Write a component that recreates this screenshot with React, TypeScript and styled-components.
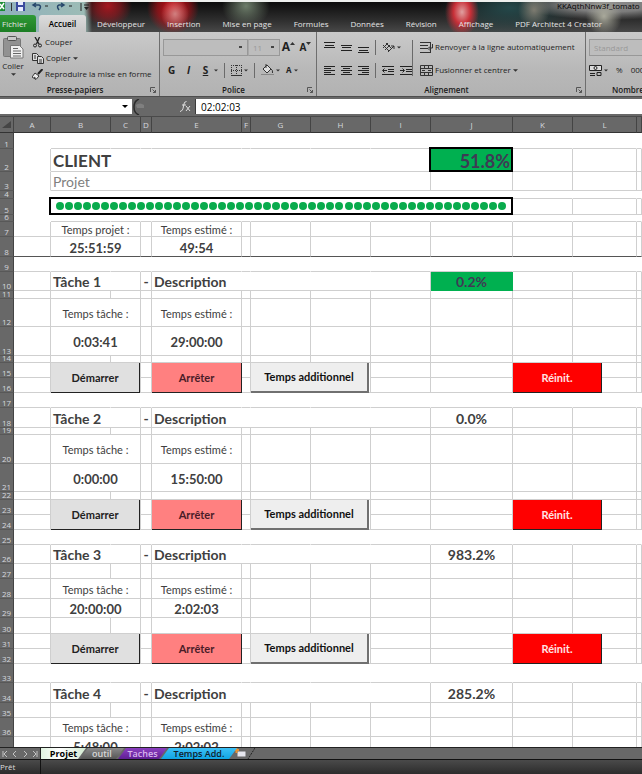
import React from "react";
import styled, { createGlobalStyle, css } from "styled-components";

const uiFont = `"Open Sans", "Noto Sans", sans-serif`;
const sheetFont = `Lato, "Open Sans", sans-serif`;
const gridLine = "#cfcfcf";
const chrome = "#686868";

const GlobalStyle = createGlobalStyle`
  *, *::before, *::after { box-sizing: border-box; }
  html, body, #root { height: 100%; }
  body { margin: 0; background: #fff; font-family: ${uiFont}; }
  button, select, input { font: inherit; color: inherit; margin: 0; padding: 0; }
`;

const Window = styled.div`
  display: flex;
  flex-direction: column;
  height: 100vh;
  overflow: hidden;
`;

/* ---------- title bar and ribbon tabs ---------- */

const Top = styled.header`
  flex: none;
  border-top: 2px solid #eef0ee;
  background:
    radial-gradient(ellipse 24px 22px at 108px 4px, #a51820 0, #a5182099 50%, transparent 100%),
    radial-gradient(ellipse 14px 16px at 175px 12px, #d08080 0, transparent 100%),
    radial-gradient(ellipse 26px 26px at 173px 6px, #d31018 0, #c0101899 60%, transparent 100%),
    radial-gradient(ellipse 24px 22px at 246px 4px, #6d7d6a 0, transparent 100%),
    radial-gradient(ellipse 17px 24px at 462px 10px, #e0a0a0 0, #c83038 50%, transparent 100%),
    radial-gradient(ellipse 16px 18px at 534px 8px, #7d7b70 0, transparent 100%),
    radial-gradient(ellipse 18px 20px at 604px 14px, #a9a99b 0, transparent 100%),
    radial-gradient(ellipse 90px 16px at 610px 2px, #8c8c8c 0, #7c7c7c 50%, transparent 100%),
    linear-gradient(90deg, #8fb0bc 0, #9dbcb6 84px, transparent 92px),
    radial-gradient(ellipse 70px 30px at 510px 6px, #24484a 0, transparent 100%),
    linear-gradient(#0c0c0c, #2e2e2e 60%, #484848);
`;

const TitleRow = styled.div`
  display: flex;
  justify-content: space-between;
  align-items: flex-start;
  height: 12px;
`;

const Title = styled.span`
  flex: none;
  width: 85px;
  white-space: nowrap;
  font-size: 8px;
  line-height: 8px;
  color: #050505;
`;

const TabRow = styled.nav`
  display: flex;
  align-items: flex-end;
  height: 18px;
`;

const Tab = styled.button<{ $kind?: "file" | "active" }>`
  flex: none;
  height: 17px;
  border: 0;
  padding: 0 11px;
  background: none;
  color: #e4e4e4;
  font-size: 8px;
  line-height: 16px;
  white-space: nowrap;
  ${(p) =>
    p.$kind === "file" &&
    css`
      width: 36px;
      padding: 0 5px 0 2px;
      margin-right: 3px;
      border-radius: 0 3px 0 0;
      background: linear-gradient(#2f9a35, #1c7d24);
      text-align: left;
    `}
  ${(p) =>
    p.$kind === "active" &&
    css`
      width: 47px;
      padding: 0;
      border-radius: 3px 3px 0 0;
      background: linear-gradient(#dcdcdc, #c8c8c8);
      color: #000;
      font-weight: 600;
    `}
`;

/* ---------- ribbon ---------- */

const Ribbon = styled.section`
  flex: none;
  display: flex;
  height: 65px;
  overflow: hidden;
  background: linear-gradient(#cacaca, #b9b9b9 55%, #b2b2b2);
  border-bottom: 1px solid #4e4e4e;
`;

const Group = styled.div<{ $w: number }>`
  flex: none;
  display: flex;
  flex-direction: column;
  width: ${(p) => p.$w}px;
  border-right: 1px solid #6e6e6e;
`;

const GroupBody = styled.div`
  flex: 1;
  display: flex;
  padding-top: 2px;
`;

const GroupFoot = styled.div`
  display: flex;
  align-items: center;
  height: 12px;
  padding: 0 3px 0 0;
  font-size: 8px;
  line-height: 12px;
  font-weight: 600;
  color: #1a1a1a;
  span { flex: 1; text-align: center; }
`;

const Stack = styled.div<{ $pl?: number }>`
  display: flex;
  flex-direction: column;
  padding-left: ${(p) => p.$pl ?? 0}px;
`;

const Line = styled.div<{ $h: number; $gap?: number }>`
  display: flex;
  align-items: center;
  height: ${(p) => p.$h}px;
  gap: ${(p) => p.$gap ?? 0}px;
`;

const Tool = styled.button`
  flex: none;
  display: flex;
  align-items: center;
  gap: 2px;
  border: 0;
  background: none;
  color: #222;
  font-size: 8px;
  line-height: 12px;
  white-space: nowrap;
`;

const PasteTool = styled(Tool)`
  flex-direction: column;
  width: 26px;
  height: 48px;
  gap: 1px;
  padding-top: 2px;
`;

const Letter = styled(Tool)<{ $italic?: boolean; $under?: boolean; $size?: number }>`
  justify-content: center;
  width: 17px;
  gap: 0;
  font-weight: 700;
  font-size: ${(p) => p.$size ?? 10}px;
  font-style: ${(p) => (p.$italic ? "italic" : "normal")};
  text-decoration: ${(p) => (p.$under ? "underline" : "none")};
  svg { align-self: flex-start; }
`;

const Combo = styled.select<{ $w: number }>`
  flex: none;
  appearance: none;
  width: ${(p) => p.$w}px;
  height: 17px;
  padding: 0 4px;
  border: 1px solid #989898;
  border-radius: 0;
  background: #bdbdbd
    linear-gradient(#444, #444) right 5px center / 3px 2px no-repeat;
  color: #999;
  font-size: 8px;
  opacity: 1;
  & + & { border-left-color: #a8a8a8; }
`;

const Divider = styled.i<{ $h?: number }>`
  flex: none;
  width: 1px;
  height: ${(p) => p.$h ?? 15}px;
  background: #6a6a6a;
`;

/* ---------- formula bar ---------- */

const FormulaBar = styled.div`
  flex: none;
  display: flex;
  height: 20px;
  padding: 2px 0;
  background: ${chrome};
  border-bottom: 1px solid #4a4a4a;
`;

const NameBox = styled.label`
  display: flex;
  align-items: center;
  width: 132px;
  padding-right: 4px;
  background: #fff;
  input { flex: 1; min-width: 0; border: 0; outline: 0; font-size: 9px; background: none; }
`;

const FxZone = styled.div`
  display: flex;
  align-items: center;
  justify-content: space-between;
  width: 64px;
  padding: 0 4px 0 1px;
  border-right: 1px solid #3b3b3b;
`;

const FormulaInput = styled.input`
  flex: 1;
  min-width: 0;
  border: 0;
  outline: 0;
  && { padding-left: 5px; font-size: 10px; }
  background: #fff;
  color: #000;
`;

/* ---------- sheet ---------- */

const SheetArea = styled.main`
  flex: 1;
  min-height: 0;
  overflow: hidden;
  background: #fff;
`;

const Sheet = styled.table`
  width: 100%;
  table-layout: fixed;
  border-collapse: separate;
  border-spacing: 0;
  font-family: ${sheetFont};
  line-height: 6px;
  color: #404040;
  th, td { padding: 0; }
`;

const ColHead = styled.th`
  height: 16px;
  border-right: 1px solid #444;
  border-bottom: 1px solid #333;
  background: ${chrome};
  color: #d6d8de;
  font: 400 8px/6px ${uiFont};
`;

const RowHead = styled.th<{ $h: number }>`
  height: ${(p) => p.$h}px;
  border-right: 1px solid #444;
  border-bottom: 1px solid #585858;
  background: ${chrome};
  color: #d6d8de;
  font: 400 8px/9px ${uiFont};
  vertical-align: bottom;
`;

const RowNum = styled.span<{ $h: number }>`
  display: flex;
  align-items: flex-end;
  justify-content: center;
  height: ${(p) => p.$h}px;
  overflow: hidden;
`;

type CellStyle = {
  $size?: number;
  $bold?: boolean;
  $align?: "left" | "center" | "right";
  $fill?: "green";
  $boxed?: boolean;
  $noRight?: boolean;
  $noBottom?: boolean;
  $dark?: boolean;
  $color?: string;
};

const Cell = styled.td<CellStyle>`
  border-right: 1px solid ${(p) => (p.$noRight ? "transparent" : gridLine)};
  border-bottom: 1px solid
    ${(p) => (p.$dark ? "#555" : p.$noBottom ? "transparent" : gridLine)};
  font-size: ${(p) => p.$size ?? 11}px;
  font-weight: ${(p) => (p.$bold ? 700 : 400)};
  text-align: ${(p) => p.$align ?? "center"};
  vertical-align: middle;
  white-space: nowrap;
  ${(p) => p.$color && css`color: ${p.$color};`}
  && {
    padding: ${(p) => `${p.$size ? 2 : 0}px ${p.$align === "center" || !p.$align ? 0 : 2}px 0`};
  }
  ${(p) =>
    p.$fill &&
    css`
      background: #00b050;
      border-color: #00b050;
      color: #3f3a55;
    `}
  ${(p) =>
    p.$boxed &&
    css`
      position: relative;
      &::after {
        content: "";
        position: absolute;
        inset: -2px -1px -1px -2px;
        border: 2px solid #000;
      }
    `}
`;

const Dots = styled.div`
  display: flex;
  justify-content: space-between;
  height: 8px;
  padding: 0 4px 0 3px;
  margin-top: -2px;
`;

const Dot = styled.i`
  width: 8px;
  height: 8px;
  border-radius: 50%;
  background: #08ab4c;
`;

const ActionButton = styled.button<{ $tone: "grey" | "light" | "pink" | "red"; $w: number }>`
  position: relative;
  display: block;
  width: ${(p) => p.$w}px;
  height: 30px;
  margin-bottom: -1px;
  border: 0;
  border-right: 1px solid #222;
  border-bottom: 1px solid #222;
  font-weight: 700;
  font-size: 11px;
  line-height: 14px;
  white-space: nowrap;
  ${(p) =>
    ({
      grey: css`background: #e0e0e0; color: #222;`,
      light: css`background: #eee; color: #111; border-width: 0 2px 2px 0; border-color: #707070;`,
      pink: css`background: #ff8080; color: #4a1c28;`,
      red: css`background: #f00; color: #ffe4e4;`,
    })[p.$tone]}
`;

/* ---------- bottom ---------- */

const SheetTabs = styled.nav`
  flex: none;
  display: flex;
  align-items: stretch;
  height: 13px;
  border-top: 1px solid #222;
  border-bottom: 1px solid #111;
  background: ${chrome};
`;

const TabNav = styled.div`
  display: flex;
  align-items: center;
  justify-content: space-around;
  width: 41px;
  border-right: 1px solid #222;
`;

const SheetTab = styled.button<{ $bg: string; $fg: string; $w: number; $active?: boolean }>`
  flex: none;
  width: ${(p) => p.$w}px;
  margin-right: -6px;
  border: 0;
  background: ${(p) => p.$bg};
  color: ${(p) => p.$fg};
  clip-path: ${(p) =>
    p.$active
      ? "polygon(0 0, 100% 0, calc(100% - 8px) 100%, 0 100%)"
      : "polygon(8px 0, 100% 0, calc(100% - 8px) 100%, 0 100%)"};
  font-size: 9px;
  line-height: 11px;
  font-weight: ${(p) => (p.$active ? 700 : 600)};
`;

const Status = styled.footer`
  flex: none;
  display: flex;
  height: 14px;
  background: linear-gradient(#4a4a4a, #2c2c2c);
  color: #ddd;
  font-size: 8px;
  line-height: 14px;
  span { width: 41px; border-right: 1px solid #111; }
`;

/* ---------- icons ---------- */

const Caret = ({ c = "#333", s = 5 }: { c?: string; s?: number }) => (
  <svg width={s} height="3" viewBox="0 0 6 3" aria-hidden="true"><path d="M0 0h6L3 3z" fill={c} /></svg>
);

const RaiseMark = ({ down }: { down?: boolean }) => (
  <svg width="5" height="4" viewBox="0 0 5 4" aria-hidden="true">
    <path d={down ? "M0 1h5L2.500 4z" : "M0 4h5L2.500 1z"} fill="#333" />
  </svg>
);

const Launcher = () => (
  <svg width="6" height="6" viewBox="0 0 6 6" aria-hidden="true">
    <path d="M.5 5V.5H5M2.500 2.500l3 3M5.500 3v2.500H3" fill="none" stroke="#555" />
  </svg>
);

const Clipboard = () => (
  <svg width="21" height="23" viewBox="0 0 21 23" aria-hidden="true">
    <rect x=".5" y="2.500" width="17" height="18" rx="1" fill="#929292" stroke="#777" />
    <rect x="4.500" y=".5" width="9" height="4" rx="1" fill="#c9c9c9" stroke="#555" />
    <path d="M7.500 9.500h9l3.500 3.500v9h-12.500z" fill="#f0f0f0" stroke="#777" />
    <path d="M10 12.500h5M10 15h8M10 17.500h8M10 20h8" stroke="#666" />
  </svg>
);

const Scissors = () => (
  <svg width="11" height="11" viewBox="0 0 11 11" fill="none" stroke="#222" aria-hidden="true">
    <path d="M3 0l4 7M7.500 0l-3 7" strokeWidth="1.300" />
    <circle cx="3" cy="8.500" r="1.500" /><circle cx="8" cy="8.500" r="1.500" />
  </svg>
);

const Copy = () => (
  <svg width="12" height="11" viewBox="0 0 12 11" fill="#ddd" stroke="#333" aria-hidden="true">
    <path d="M.5.5h4l2 2v5h-6z" /><path d="M5.500 3.500h4l2 2v5h-6z" /><path d="M7 7h3M7 9h3M2 3h2M2 5h2" />
  </svg>
);

const Brush = () => (
  <svg width="11" height="11" viewBox="0 0 11 11" aria-hidden="true">
    <path d="M10.500 0L6 5" stroke="#222" strokeWidth="2" />
    <path d="M3 4l4 3-3 3.500L0 8z" fill="#eee" stroke="#333" />
    <path d="M2 8l2 1.500" stroke="#333" />
  </svg>
);

const Bars = ({ rows }: { rows: [number, number, number][] }) => (
  <svg width="11" height="12" viewBox="0 0 11 12" aria-hidden="true">
    {rows.map(([x, y, w]) => <rect key={y} x={x} y={y} width={w} height="1" fill="#222" />)}
  </svg>
);

const vTop: [number, number, number][] = [[0, 1, 11], [1, 4, 9], [0, 6, 11]];
const vMid: [number, number, number][] = [[0, 4, 11], [1, 6, 9], [0, 9, 11]];
const vBot: [number, number, number][] = [[0, 6, 11], [1, 9, 9], [0, 11, 11]];
const hLeft: [number, number, number][] = [[0, 2, 11], [0, 4, 7], [0, 6, 11], [0, 8, 7], [0, 10, 11]];
const hMid: [number, number, number][] = [[0, 2, 11], [2, 4, 7], [0, 6, 11], [2, 8, 7], [0, 10, 11]];
const hRight: [number, number, number][] = [[0, 2, 11], [4, 4, 7], [0, 6, 11], [4, 8, 7], [0, 10, 11]];

const Indent = ({ right }: { right?: boolean }) => (
  <svg width="12" height="11" viewBox="0 0 12 11" fill="none" stroke="#222" aria-hidden="true">
    <path d="M0 1.500h12M6 4.500h6M6 6.500h6M0 9.500h12" />
    <path d={right ? "M0 5.500h4M2.500 3.500l2 2-2 2" : "M5 5.500H1M2.500 3.500l-2 2 2 2"} />
  </svg>
);

const Orientation = () => (
  <svg width="13" height="11" viewBox="0 0 13 11" fill="none" stroke="#333" aria-hidden="true">
    <path d="M1 6l5-5M3 8l5-5M1 3l6 6M4 1l5 5" /><path d="M6 10l6-6M9 4h3v3" />
  </svg>
);

const BorderIcon = () => (
  <svg width="11" height="11" viewBox="0 0 11 11" fill="none" stroke="#333" aria-hidden="true">
    <path d="M.5 0v10M5.500 0v10M10.500 0v10M0 .5h11M0 5.500h11" strokeDasharray="1 1" /><path d="M0 10.500h11" />
  </svg>
);

const FillIcon = () => (
  <svg width="13" height="12" viewBox="0 0 13 12" aria-hidden="true">
    <path d="M2 5l4-4 4 4-4 4z" fill="#ddd" stroke="#333" /><path d="M5 4V0M10 5q2 1 1.500 4" stroke="#333" fill="none" />
    <rect y="10" width="13" height="1" fill="#888" />
  </svg>
);

const WrapIcon = () => (
  <svg width="13" height="11" viewBox="0 0 13 11" fill="none" stroke="#333" aria-hidden="true">
    <path d="M0 .5h10M0 3.500h8M0 6.500h8M0 10.500h10M10.500 0v11" /><path d="M12.500 2v4H9M10 4.500l-2 2 2 2" />
  </svg>
);

const MergeIcon = () => (
  <svg width="13" height="11" viewBox="0 0 13 11" fill="none" stroke="#333" aria-hidden="true">
    <path d="M.5.500h12v10H.5zM0 3.500h13M0 7.500h13M4.500 0v3M8.500 0v3M4.500 8v3M8.500 8v3M2 5.500h3M11 5.500H8" />
  </svg>
);

const MoneyIcon = () => (
  <svg width="13" height="13" viewBox="0 0 13 13" fill="none" stroke="#222" aria-hidden="true">
    <path d="M.5 1.500h12v5H.5z" fill="#ddd" /><circle cx="6.500" cy="4" r="1.500" />
    <path d="M1 9.500h5M1 11.500h5M8 8.500h4v3H8z" />
  </svg>
);

const QuickIcons = () => (
  <svg width="92" height="12" viewBox="0 0 92 12" fill="none" aria-hidden="true">
    <path d="M0 0h5v9H0z" fill="#1c8c33" /><path d="M0 2l4 5M4 1L0 7" stroke="#fff" strokeWidth="1.500" />
    <path d="M11.500 1v8" stroke="#333" />
    <path d="M16 0h9v9h-9z" fill="#3a4a9e" /><path d="M18 0h5v3h-5zM18 5h5v4h-5z" fill="#e8ecff" />
    <path d="M34 3h5q3 1 0 5M36 1l-3 2 3 2" stroke="#27476b" strokeWidth="1.500" />
    <path d="M45 4h3M69 4h3" stroke="#222" />
    <path d="M63 3h-4q-3 1 0 5M61 1l3 2-3 2" stroke="#27476b" strokeWidth="1.500" />
    <path d="M81 1v8M84 3h5" stroke="#222" /><path d="M84 5h5l-2.500 3z" fill="#222" />
  </svg>
);

const NewSheet = () => (
  <svg width="24" height="11" viewBox="0 0 24 11" aria-hidden="true">
    <path d="M6 3h9v6H6z" fill="#e6e6ee" stroke="#666" /><path d="M3 2h5M5.500 0v5" stroke="#e89030" strokeWidth="2" />
    <path d="M24 0l-7 11" stroke="#222" strokeDasharray="2 1" />
  </svg>
);

/* ---------- data ---------- */

const columns: [string, number | undefined][] = [
  ["A", 37], ["B", 60], ["C", 30], ["D", 11], ["E", 90], ["F", 9], ["G", 60],
  ["H", 60], ["I", 60], ["J", 82], ["K", 60], ["L", 64], ["", undefined],
];

const ribbonTabs = ["Développeur", "Insertion", "Mise en page", "Formules", "Données", "Révision", "Affichage", "PDF Architect 4 Creator"];

type Task = {
  name: string;
  spent: string;
  planned: string;
  percent: string;
  filled?: boolean;
  first: number;
  heights: number[];
};

const tasks: Task[] = [
  { name: "Tâche 1", spent: "0:03:41", planned: "29:00:00", percent: "0.2%", filled: true, first: 10, heights: [19, 8, 28, 29, 7, 15, 15, 15] },
  { name: "Tâche 2", spent: "0:00:00", planned: "15:50:00", percent: "0.0%", first: 18, heights: [20, 7, 29, 28, 8, 15, 15, 15] },
  { name: "Tâche 3", spent: "20:00:00", planned: "2:02:03", percent: "983.2%", first: 26, heights: [19, 15, 20, 19, 16, 15, 15, 19] },
  { name: "Tâche 4", spent: "5:48:00", planned: "2:02:02", percent: "285.2%", first: 34, heights: [20, 15, 19, 19] },
];

const Row = ({ n, h, children }: { n: number; h: number; children: React.ReactNode }) => (
  <tr>
    <RowHead scope="row" $h={h}><RowNum $h={h - 1}>{n}</RowNum></RowHead>
    {children}
  </tr>
);

const Blank = ({ count, ...rest }: { count: number } & CellStyle) => (
  <>{Array.from({ length: count }, (_, i) => <Cell key={i} {...rest} />)}</>
);

const TimePair = ({ left, right, bold, dark }: { left: string; right: string; bold?: boolean; dark?: boolean }) => {
  const s = { $size: bold ? 13 : 11, $bold: bold, $dark: dark };
  return (
    <>
      <Cell $dark={dark} />
      <Cell colSpan={2} {...s}>{left}</Cell>
      <Cell $dark={dark} />
      <Cell {...s}>{right}</Cell>
      <Blank count={8} $dark={dark} />
    </>
  );
};

const TaskRows = ({ task }: { task: Task }) => {
  const [a, b, c, d, e, f, g, h] = task.heights;
  const n = task.first;
  return (
    <>
      <Row n={n} h={a}>
        <Cell />
        <Cell colSpan={2} $bold $size={14} $align="left">{task.name}</Cell>
        <Cell $bold $size={14}>-</Cell>
        <Cell colSpan={5} $bold $size={14} $align="left">Description</Cell>
        <Cell $bold $size={14} $fill={task.filled ? "green" : undefined}>{task.percent}</Cell>
        <Blank count={3} />
      </Row>
      <Row n={n + 1} h={b}><Blank count={13} /></Row>
      <Row n={n + 2} h={c}><TimePair left="Temps tâche :" right="Temps estimé :" /></Row>
      <Row n={n + 3} h={d}><TimePair left={task.spent} right={task.planned} bold /></Row>
      {e !== undefined && (
        <>
          <Row n={n + 4} h={e}><Blank count={13} /></Row>
          <Row n={n + 5} h={f}>
            <Cell />
            <Cell colSpan={2} rowSpan={2}><ActionButton $tone="grey" $w={89}>Démarrer</ActionButton></Cell>
            <Cell />
            <Cell rowSpan={2}><ActionButton $tone="pink" $w={90}>Arrêter</ActionButton></Cell>
            <Cell />
            <Cell colSpan={2} rowSpan={2}><ActionButton $tone="light" $w={118}>Temps additionnel</ActionButton></Cell>
            <Blank count={2} />
            <Cell rowSpan={2}><ActionButton $tone="red" $w={89}>Réinit.</ActionButton></Cell>
            <Blank count={2} />
          </Row>
          <Row n={n + 6} h={g}><Blank count={7} /></Row>
          <Row n={n + 7} h={h}><Blank count={13} $noRight /></Row>
        </>
      )}
    </>
  );
};

export default function App() {
  return (
    <Window>
      <GlobalStyle />
      <Top>
        <TitleRow>
          <QuickIcons />
          <Title>KKAqthNnw3f_tomato</Title>
        </TitleRow>
        <TabRow aria-label="Ruban">
          <Tab $kind="file">Fichier</Tab>
          <Tab $kind="active">Accueil</Tab>
          {ribbonTabs.map((t) => <Tab key={t}>{t}</Tab>)}
        </TabRow>
      </Top>

      <Ribbon>
        <Group $w={160}>
          <GroupBody>
            <PasteTool><Clipboard />Coller<Caret /></PasteTool>
            <Stack $pl={6}>
              <Line $h={16}><Tool><Scissors />Couper</Tool></Line>
              <Line $h={16}><Tool><Copy />Copier <Caret /></Tool></Line>
              <Line $h={16}><Tool><Brush />Reproduire la mise en forme</Tool></Line>
            </Stack>
          </GroupBody>
          <GroupFoot><span>Presse-papiers</span><Launcher /></GroupFoot>
        </Group>

        <Group $w={157}>
          <GroupBody>
            <Stack $pl={3}>
              <Line $h={26}>
                <Combo $w={85} aria-label="Police" defaultValue=""><option value=""></option></Combo>
                <Combo $w={32} aria-label="Taille"><option>11</option></Combo>
                <Letter $size={12}>A<RaiseMark /></Letter>
                <Letter $size={10}>A<RaiseMark down /></Letter>
              </Line>
              <Line $h={20}>
                <Letter>G</Letter>
                <Letter $italic>I</Letter>
                <Letter $under>S</Letter>
                <Line $h={12} $gap={6}>
                  <Caret s={4} /><Divider />
                  <Tool aria-label="Bordures"><BorderIcon /><Caret s={4} /></Tool><Divider />
                  <Tool aria-label="Remplissage"><FillIcon /><Caret s={4} /></Tool>
                  <Tool aria-label="Couleur de police"><b>A</b><Caret s={4} /></Tool>
                </Line>
              </Line>
            </Stack>
          </GroupBody>
          <GroupFoot><span>Police</span><Launcher /></GroupFoot>
        </Group>

        <Group $w={269}>
          <GroupBody>
            <Stack $pl={7}>
              <Line $h={26} $gap={6}>
                <Tool aria-label="Haut"><Bars rows={vTop} /></Tool>
                <Tool aria-label="Milieu"><Bars rows={vMid} /></Tool>
                <Tool aria-label="Bas"><Bars rows={vBot} /></Tool>
                <Divider />
                <Tool aria-label="Orientation"><Orientation /><Caret s={4} /></Tool>
              </Line>
              <Line $h={20} $gap={6}>
                <Tool aria-label="Gauche"><Bars rows={hLeft} /></Tool>
                <Tool aria-label="Centre"><Bars rows={hMid} /></Tool>
                <Tool aria-label="Droite"><Bars rows={hRight} /></Tool>
                <Divider />
                <Tool aria-label="Diminuer le retrait"><Indent /></Tool>
                <Tool aria-label="Augmenter le retrait"><Indent right /></Tool>
              </Line>
            </Stack>
            <Line $h={48}><Divider $h={36} /></Line>
            <Stack $pl={7}>
              <Line $h={26}><Tool><WrapIcon />Renvoyer à la ligne automatiquement</Tool></Line>
              <Line $h={20}><Tool><MergeIcon />Fusionner et centrer <Caret /></Tool></Line>
            </Stack>
          </GroupBody>
          <GroupFoot><span>Alignement</span><Launcher /></GroupFoot>
        </Group>

        <Group $w={94}>
          <GroupBody>
            <Stack $pl={3}>
              <Line $h={26}><Combo $w={84} aria-label="Format"><option>Standard</option></Combo></Line>
              <Line $h={20} $gap={8}>
                <Tool aria-label="Monnaie"><MoneyIcon /><Caret s={4} /></Tool>
                <Tool>%</Tool>
                <Tool>000</Tool>
              </Line>
            </Stack>
          </GroupBody>
          <GroupFoot><span>Nombre</span><Launcher /></GroupFoot>
        </Group>
      </Ribbon>

      <FormulaBar>
        <NameBox><input aria-label="Zone Nom" /><Caret c="#000" s={6} /></NameBox>
        <FxZone>
          <svg width="14" height="16" viewBox="0 0 14 16" fill="none" aria-hidden="true">
            <path d="M6 0Q1 2 1 8t5 8" stroke="#2d2d2d" strokeWidth="1.500" />
            <path d="M3 6q4-3 8 0v3H4z" fill="#7f7f7f" />
          </svg>
          <svg width="11" height="11" viewBox="0 0 11 11" fill="none" stroke="#e0e0e0" aria-hidden="true">
            <path d="M6.500.500Q4 0 3.500 5T0 10.500M2 4h4M6 5l4 5M10 5l-4 5" />
          </svg>
        </FxZone>
        <FormulaInput aria-label="Barre de formule" defaultValue="02:02:03" />
      </FormulaBar>

      <SheetArea>
        <Sheet>
          <colgroup>
            <col width={14} />
            {columns.map(([, w], i) => <col key={i} width={w} />)}
          </colgroup>
          <thead>
            <tr>
              <ColHead>
                <svg width="9" height="7" viewBox="0 0 9 7" aria-hidden="true"><path d="M9 0v7H0z" fill="#454545" /></svg>
              </ColHead>
              {columns.map(([c], i) => <ColHead key={i} scope="col">{c}</ColHead>)}
            </tr>
          </thead>
          <tbody>
            <Row n={1} h={16}><Cell $noRight $noBottom /><Blank count={12} $noRight /></Row>
            <Row n={2} h={23}>
              <Cell $noBottom />
              <Cell colSpan={8} $bold $size={17} $align="left">CLIENT</Cell>
              <Cell $bold $size={18} $align="right" $fill="green" $boxed>51.8%</Cell>
              <Blank count={3} />
            </Row>
            <Row n={3} h={19}>
              <Cell $noBottom />
              <Cell colSpan={8} $size={14} $align="left" $color="#808080">Projet</Cell>
              <Blank count={4} />
            </Row>
            <Row n={4} h={8}><Cell $noRight $noBottom /><Blank count={12} $noRight /></Row>
            <Row n={5} h={16}>
              <Cell $noBottom />
              <Cell colSpan={9} $align="left" $boxed>
                <Dots role="progressbar" aria-label="Avancement du projet" aria-valuenow={51.8}>
                  {Array.from({ length: 50 }, (_, i) => <Dot key={i} />)}
                </Dots>
              </Cell>
              <Blank count={3} />
            </Row>
            <Row n={6} h={7}><Cell $noRight $noBottom /><Blank count={12} $noRight /></Row>
            <Row n={7} h={15}><TimePair left="Temps projet :" right="Temps estimé :" /></Row>
            <Row n={8} h={20}><TimePair left="25:51:59" right="49:54" bold dark /></Row>
            <Row n={9} h={15}><Blank count={13} $noRight /></Row>
            {tasks.map((t) => <TaskRows key={t.name} task={t} />)}
          </tbody>
        </Sheet>
      </SheetArea>

      <SheetTabs aria-label="Feuilles">
        <TabNav>
          {["M5 1L2 4l3 3M1 1v6", "M4 1L1 4l3 3", "M2 1l3 3-3 3", "M1 1l3 3-3 3M5 1v6"].map((d) => (
            <svg key={d} width="6" height="8" viewBox="0 0 6 8" fill="none" stroke="#c4c4c4" aria-hidden="true"><path d={d} /></svg>
          ))}
        </TabNav>
        <SheetTab $active $w={45} $bg="linear-gradient(90deg, #dff3df, #fff 40%, #d2ead0)" $fg="#000">Projet</SheetTab>
        <SheetTab $w={44} $bg="linear-gradient(#8a8a8a, #555)" $fg="#d8d8d8">outil</SheetTab>
        <SheetTab $w={49} $bg="linear-gradient(#8b3fc0, #5f1f94)" $fg="#d9b5ee">Taches</SheetTab>
        <SheetTab $w={76} $bg="linear-gradient(#3cc0f5, #10a5e4)" $fg="#10202c">Temps Add.</SheetTab>
        <NewSheet />
      </SheetTabs>
      <Status><span>Prêt</span></Status>
    </Window>
  );
}
